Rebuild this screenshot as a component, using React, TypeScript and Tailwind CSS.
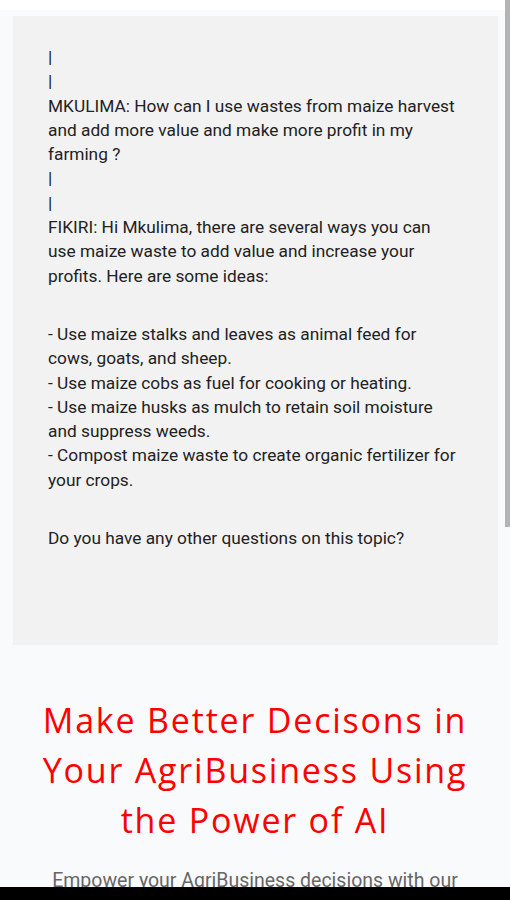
import React from 'react';

const ideas = [
  '- Use maize stalks and leaves as animal feed for cows, goats, and sheep.',
  '- Use maize cobs as fuel for cooking or heating.',
  '- Use maize husks as mulch to retain soil moisture and suppress weeds.',
  '- Compost maize waste to create organic fertilizer for your crops.',
];

export default function App() {
  return (
    <div className="relative h-[900px] overflow-hidden bg-[#f9fafb]" style={{ fontFamily: 'Roboto, "Noto Sans", sans-serif' }}>
      <div className="h-[10px] bg-white" />
      <div className="pl-[13px] pt-[6px] pr-[12px]">
        <div className="bg-[#f2f2f2] h-[629px] pl-[35px] pr-[37px] pt-[29px] text-[17.3px] leading-[24.3px] text-[#222]">
          <p>|</p>
          <p>|</p>
          <p>MKULIMA: How can I use wastes from maize harvest and add more value and make more profit in my farming ?</p>
          <p>|</p>
          <p>|</p>
          <p>FIKIRI: Hi Mkulima, there are several ways you can use maize waste to add value and increase your profits. Here are some ideas:</p>
          <div className="mt-[34px]">
            {ideas.map((t) => (
              <p key={t}>{t}</p>
            ))}
          </div>
          <p className="mt-[34px]">Do you have any other questions on this topic?</p>
        </div>
      </div>

      <h1
        className="mt-[50px] px-[20px] text-center text-[34px] leading-[50px] tracking-[1.8px] text-[#ff0000]"
        style={{ fontFamily: '"Open Sans", "Noto Sans", sans-serif' }}
      >
        Make Better Decisons in
        <br />
        Your AgriBusiness Using
        <br />
        the Power of AI
      </h1>
      <p className="mt-[22px] px-[44px] text-center text-[19.5px] leading-[28px] text-[#666]">
        Empower your AgriBusiness decisions with our AI-powered platform.
      </p>

      {/* scrollbar thumb */}
      <div className="absolute right-0 top-0 h-[527px] w-[5px] bg-[#b4b4b4]" />
      {/* device nav bar */}
      <div className="absolute bottom-0 left-0 right-0 h-[13px] bg-black" />
    </div>
  );
}
